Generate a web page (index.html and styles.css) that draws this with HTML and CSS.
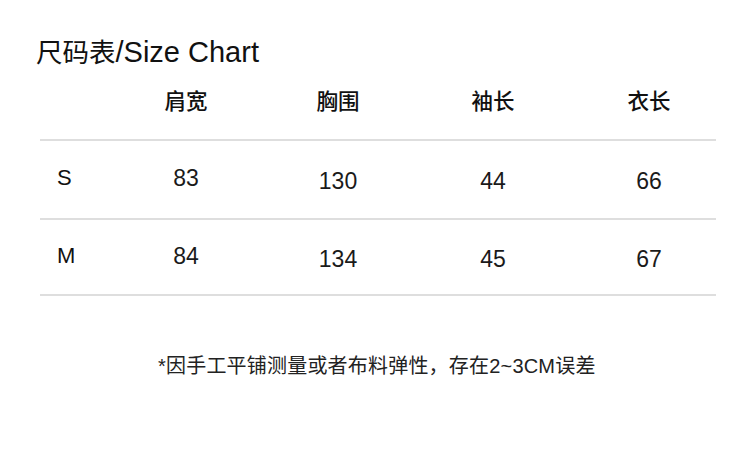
FILE: index.html
```html
<!DOCTYPE html>
<html lang="zh">
<head>
<meta charset="utf-8">
<title>尺码表</title>
<link rel="stylesheet" href="styles.css">
</head>
<body>
<div class="page">
  <h1 class="title">尺码表<span class="latin">/Size Chart</span></h1>
  <div class="table">
    <div class="row head">
      <div class="cell size"></div>
      <div class="cell">肩宽</div>
      <div class="cell">胸围</div>
      <div class="cell">袖长</div>
      <div class="cell">衣长</div>
    </div>
    <div class="row body r1">
      <div class="cell size">S</div>
      <div class="cell up">83</div>
      <div class="cell">130</div>
      <div class="cell">44</div>
      <div class="cell">66</div>
    </div>
    <div class="row body r2">
      <div class="cell size">M</div>
      <div class="cell up">84</div>
      <div class="cell">134</div>
      <div class="cell">45</div>
      <div class="cell">67</div>
    </div>
  </div>
  <p class="note">*因手工平铺测量或者布料弹性，存在2~3CM误差</p>
</div>
</body>
</html>
```
FILE: styles.css
```css
html, body {
  margin: 0;
  padding: 0;
  background: #fff;
}
body {
  font-family: "Liberation Sans", "Noto Sans CJK SC", sans-serif;
  color: #111;
  width: 750px;
  height: 461px;
  overflow: hidden;
}
.page {
  padding: 34px 0 0 40px;
}
.title {
  margin: 0 0 0 -4px;
  font-size: 26.5px;
  font-weight: normal;
  line-height: 36px;
  color: #111;
  white-space: nowrap;
}
.title .latin {
  font-size: 29px;
}
.table {
  width: 676px;
}
.row {
  display: grid;
  grid-template-columns: 69px 154px 150px 160px 152px;
  align-items: center;
}
.head {
  height: 62px;
  padding-bottom: 6px;
  border-bottom: 2px solid #dedede;
  font-size: 21.5px;
  font-weight: 500;
}
.body {
  border-bottom: 2px solid #dedede;
  font-size: 23px;
  color: #1a1a1a;
}
.r1 {
  height: 77px;
}
.r2 {
  height: 74px;
}
.cell {
  text-align: center;
  line-height: 28px;
}
.body .cell {
  padding-top: 3px;
}
.cell.size {
  text-align: left;
  padding-left: 17px;
  font-size: 22px;
  font-weight: 500;
  color: #111;
}
.body .cell.size,
.body .cell.up {
  padding-top: 0;
  padding-bottom: 3px;
}
.note {
  margin: 58px 0 0 118px;
  font-size: 20px;
  line-height: 24px;
  letter-spacing: 0.2px;
  color: #222;
  white-space: nowrap;
}
```
